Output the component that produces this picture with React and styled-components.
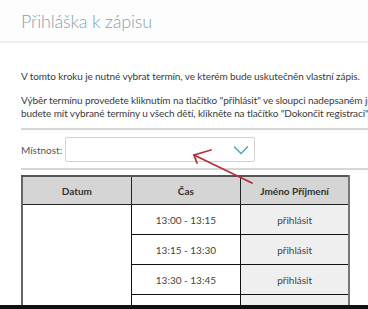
import React from "react";
import styled, { createGlobalStyle } from "styled-components";

const GlobalStyle = createGlobalStyle`
  html, body {
    margin: 0;
    padding: 0;
    background: #ffffff;
    overflow: hidden;
  }
  body {
    font-family: "Lato", "Noto Sans", sans-serif;
    color: #333;
  }
`;

const Page = styled.div`
  position: relative;
  width: 368px;
  height: 305px;
  overflow: hidden;
  border-bottom: 4px solid #111;
  background: #fff;
`;

const TitleBar = styled.header`
  height: 41px;
  padding-left: 21px;
  border-bottom: 2px solid #efefef;
  background: #fdfdfd;
  display: flex;
  align-items: flex-end;
`;

const Title = styled.h1`
  margin: 0 0 9px 0;
  font-family: "Lato", sans-serif;
  font-weight: 300;
  font-size: 18px;
  color: #8aa0ad;
  letter-spacing: -0.2px;
`;

const Content = styled.section`
  padding: 0 0 0 21px;
  width: 420px;
`;

const Para = styled.p`
  margin: ${(p) => p.$top}px 0 0 0;
  font-size: 10px;
  line-height: 13px;
  letter-spacing: -0.1px;
  color: #3a3a3a;
  white-space: nowrap;
`;

const Divider = styled.hr`
  margin: ${(p) => p.$top}px 0 0 0;
  border: none;
  border-top: 2px solid #d6d6d6;
  width: 347px;
`;

const FieldRow = styled.div`
  display: flex;
  align-items: center;
  gap: 3px;
  margin-top: 7px;
  height: 25px;
`;

const Label = styled.label`
  font-size: 10px;
  color: #555;
`;

const Select = styled.div`
  width: 183px;
  height: 23px;
  border: 1px solid #d3d3d3;
  border-radius: 2px;
  background: #fff;
  display: flex;
  align-items: center;
  justify-content: flex-end;
  padding-right: 5px;
  box-sizing: content-box;
`;

const Table = styled.table`
  margin-top: 5px;
  width: 329px;
  border-collapse: collapse;
  font-size: 10px;
  border-left: 2px solid #666;
  border-right: 2px solid #777;
  border-top: 2px solid #555;
`;

const Th = styled.th`
  height: 27px;
  padding: 0;
  background: #d5d5d5;
  font-weight: 700;
  color: #333;
  border: 1px solid #222;
  border-top: none;
  width: ${(p) => p.$w}px;
`;

const Td = styled.td`
  height: 29px;
  padding: 0;
  text-align: center;
  vertical-align: middle;
  border: 1px solid #111;
  color: #444;
  background: ${(p) => (p.$shade ? "#efefef" : "#fff")};
`;

const Arrow = styled.svg`
  position: absolute;
  left: 0;
  top: 0;
  pointer-events: none;
`;

const slots = ["13:00 - 13:15", "13:15 - 13:30", "13:30 - 13:45", "13:45 - 14:00"];

export default function App() {
  return (
    <>
      <GlobalStyle />
      <Page>
        <TitleBar>
          <Title>Přihláška k zápisu</Title>
        </TitleBar>
        <Content>
          <Para $top={27}>
            V tomto kroku je nutné vybrat termín, ve kterém bude uskutečněn vlastní zápis.
          </Para>
          <Para $top={11}>
            Výběr termínu provedete kliknutím na tlačítko "přihlásit" ve sloupci nadepsaném jménem dítěte. Jakmile
            <br />
            budete mít vybrané termíny u všech dětí, klikněte na tlačítko "Dokončit registraci".
          </Para>
          <Divider $top={8} />
          <FieldRow>
            <Label>Místnost:</Label>
            <Select>
              <svg width="16" height="10" viewBox="0 0 16 10">
                <polyline points="1,1.5 8,8.5 15,1.5" fill="none" stroke="#4aa3b8" strokeWidth="1.4" />
              </svg>
            </Select>
          </FieldRow>
          <Divider $top={6} />
          <Table>
            <thead>
              <tr>
                <Th $w={109}>Datum</Th>
                <Th $w={110}>Čas</Th>
                <Th $w={108}>Jméno Příjmení</Th>
              </tr>
            </thead>
            <tbody>
              {slots.map((s, i) => (
                <tr key={s}>
                  {i === 0 && <Td rowSpan={slots.length} />}
                  <Td>{s}</Td>
                  <Td $shade>přihlásit</Td>
                </tr>
              ))}
            </tbody>
          </Table>
        </Content>
        <Arrow width="368" height="309" viewBox="0 0 368 309">
          <g fill="none" stroke="#b3303b" strokeWidth="1.8" strokeLinecap="round" strokeLinejoin="round">
            <path d="M252 183 L194 155" />
            <path d="M211 150 L194 155 L197 163" />
          </g>
        </Arrow>
      </Page>
    </>
  );
}
